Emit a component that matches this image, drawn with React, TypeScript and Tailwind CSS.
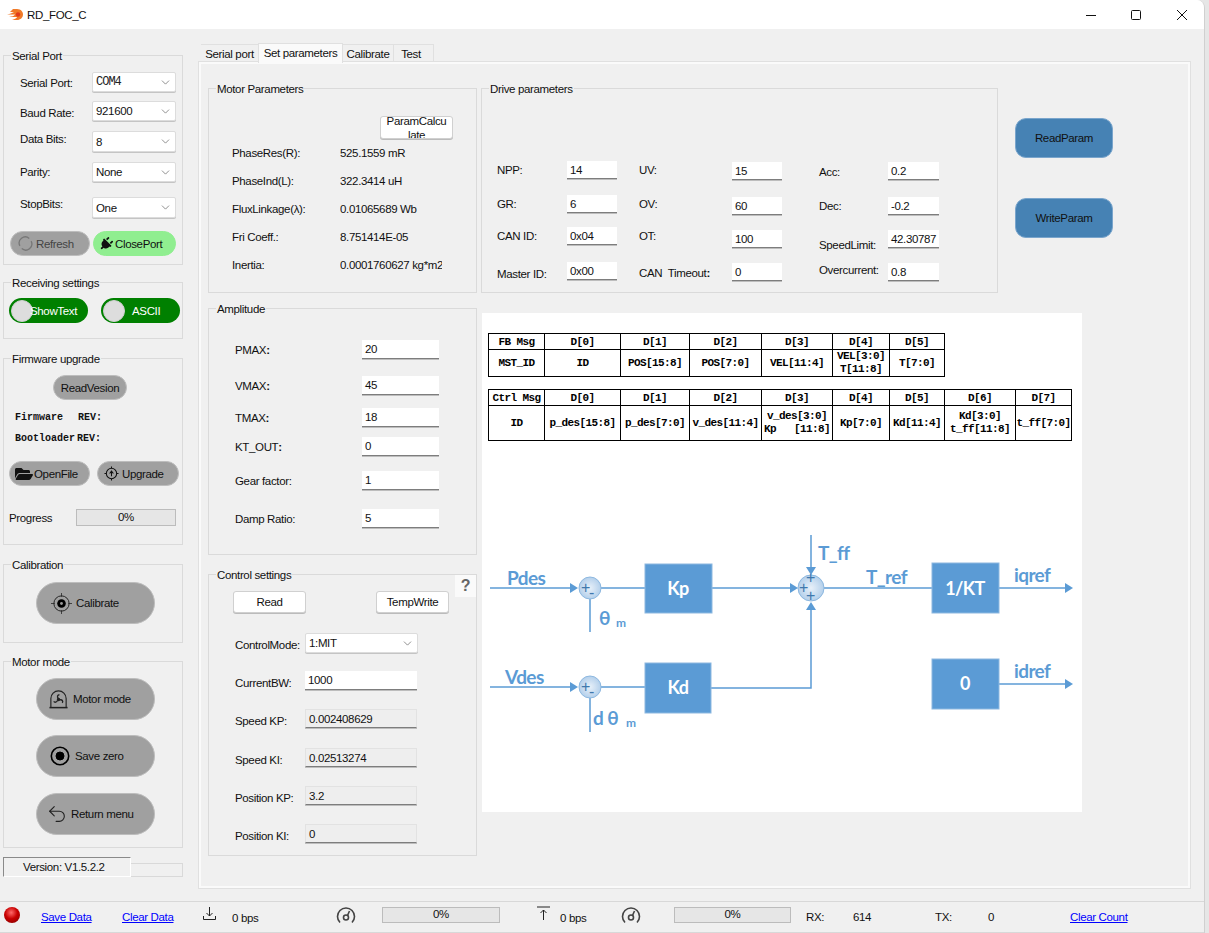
import React from "react";
import { ChevronDown, Undo2 } from "lucide-react";
import { FaPlug, FaFolderOpen } from "react-icons/fa";

const Group = ({ title, className = "", children }: { title: string; className?: string; children?: React.ReactNode }) => (
  <section className={`relative shrink-0 border border-[#dadada] ${className}`}>
    <span className="absolute left-[7px] top-[-7px] bg-[#f0f0f0] px-[1px] leading-[14px] whitespace-nowrap">{title}</span>
    {children}
  </section>
);

const Select = ({ value, className = "", mono = false }: { value: string; className?: string; mono?: boolean }) => (
  <div className={`flex items-center justify-between bg-white border border-[#dcdcdc] rounded-[2px] pl-[3px] pr-[3px] shadow-[0_1px_0_#c4c4c4] ${className}`}>
    <span className={mono ? "font-['Liberation_Mono',monospace] text-[12px] tracking-[-1px] text-[#222]" : ""}>{value}</span>
    <ChevronDown size={13} strokeWidth={1.2} color="#555" />
  </div>
);

const Input = ({ value, className = "", gray = false }: { value: string; className?: string; gray?: boolean }) => (
  <div className={`flex items-center shrink-0 border-b border-[#7d7d7d] shadow-[0_1px_0_#bdbdbd] px-[3px] overflow-hidden whitespace-nowrap ${gray ? "bg-[#eeeeee] border-t border-l border-r border-t-[#e2e2e2] border-l-[#e2e2e2] border-r-[#e2e2e2]" : "bg-white"} ${className}`}>
    {value}
  </div>
);

const Row = ({ label, value, rowClass = "", labelClass = "", inputClass = "", gray = false }: { label: React.ReactNode; value: string; rowClass?: string; labelClass?: string; inputClass?: string; gray?: boolean }) => (
  <div className={`flex items-center shrink-0 ${rowClass}`}>
    <span className={`shrink-0 whitespace-nowrap ${labelClass}`}>{label}</span>
    <Input value={value} className={`h-full ${inputClass}`} gray={gray} />
  </div>
);

const SerialRow = ({ label, value, rowClass = "", labelClass = "", mono = false }: { label: string; value: string; rowClass?: string; labelClass?: string; mono?: boolean }) => (
  <div className={`flex items-center pl-[16px] shrink-0 ${rowClass}`}>
    <span className={`w-[72px] shrink-0 ${labelClass}`}>{label}</span>
    <Select value={value} className="w-[84px] h-full" mono={mono} />
  </div>
);

const Pill = ({ className = "", green = false, children }: { className?: string; green?: boolean; children?: React.ReactNode }) => (
  <div className={`flex items-center shrink-0 rounded-full border whitespace-nowrap ${green ? "bg-[#90ee90] border-[#90ee90]" : "bg-[#a0a0a0] border-[#bdbdbd]"} ${className}`}>{children}</div>
);

const WhiteBtn = ({ className = "", children }: { className?: string; children?: React.ReactNode }) => (
  <div className={`flex items-center justify-center shrink-0 bg-white border border-[#d0d0d0] rounded-[3px] shadow-[0_1px_0_#bbb] ${className}`}>{children}</div>
);

const Progress = ({ className = "" }: { className?: string }) => (
  <div className={`flex items-center justify-center shrink-0 bg-[#e6e6e6] border border-[#bcbcbc] pb-[2px] ${className}`}>0%</div>
);

const Toggle = ({ text, textClass }: { text: string; textClass: string }) => (
  <div className="flex items-center w-[79px] h-[25px] shrink-0 rounded-full bg-[#008000] pl-[2px] text-white">
    <span className="w-[22px] h-[22px] rounded-full bg-[#dddddd] border border-[#cfcfcf] shrink-0" />
    <span className={textClass}>{text}</span>
  </div>
);

const GaugeIcon = ({ className = "" }: { className?: string }) => (
  <svg viewBox="0 0 20 18" width={20} height={18} fill="none" stroke="#444" strokeWidth={1.6} className={`shrink-0 ${className}`}>
    <path d="M4 16.5 A8.5 8.5 0 1 1 16 16.5" />
    <circle cx={10} cy={11.5} r={2.5} />
    <path d="M11.5 9.5 L13.5 5" />
  </svg>
);

const Th = ({ children }: { children: React.ReactNode }) => <th className="border border-black p-0 font-bold text-center align-middle">{children}</th>;
const Td = ({ children }: { children: React.ReactNode }) => <td className="border border-black p-0 font-bold text-center align-middle leading-[13px] whitespace-pre">{children}</td>;

const blue = "#5b9bd5";
const Sum = ({ cx, cy, r, id }: { cx: number; cy: number; r: number; id: string }) => (
  <circle cx={cx} cy={cy} r={r} fill={`url(#${id})`} stroke="#8db8e0" strokeWidth={1} />
);
const Arrow = ({ d }: { d: string }) => <path d={d} fill={blue} />;

const Diagram = () => (
  <svg viewBox="482 525 600 240" width={600} height={240} className="block mt-[86px] ml-[-6px] shrink-0" fontFamily="Lato, sans-serif" fontWeight={700}>
    <defs>
      <radialGradient id="sumg" cx="0.5" cy="0.5" r="0.6">
        <stop offset="0" stopColor="#e8f0f9" />
        <stop offset="1" stopColor="#a9c9e8" />
      </radialGradient>
    </defs>
    <g stroke={blue} strokeWidth={1.5} fill="none">
      <path d="M490 586 H572" />
      <path d="M601 586 H645" />
      <path d="M712 586 H792" />
      <path d="M824 586 H932" />
      <path d="M999 586 H1066" />
      <path d="M590 597 V630" />
      <path d="M811 533 V566" />
      <path d="M490 685 H572" />
      <path d="M601 685 H645" />
      <path d="M711 686 H811 V608" />
      <path d="M590 696 V730" />
      <path d="M999 682 H1066" />
    </g>
    <Sum cx={590} cy={586} r={11} id="sumg" />
    <Sum cx={590} cy={685} r={11} id="sumg" />
    <Sum cx={811} cy={586} r={13} id="sumg" />
    <Arrow d="M578 586 L570 581 V591 Z" />
    <Arrow d="M798 586 L790 581 V591 Z" />
    <Arrow d="M811 573 L806 565 H816 Z" />
    <Arrow d="M811 600 L806 608 H816 Z" />
    <Arrow d="M1073 586 L1065 581 V591 Z" />
    <Arrow d="M578 685 L570 680 V690 Z" />
    <Arrow d="M1073 682 L1065 677 V687 Z" />
    <g fill={blue} stroke="#8db8e0" strokeWidth={1}>
      <rect x={645} y={562} width={67} height={49} />
      <rect x={645} y={661} width={66} height={50} />
      <rect x={932} y={561} width={67} height={50} />
      <rect x={932} y={657} width={67} height={50} />
    </g>
    <g fill="#ffffff" fontSize={18} textAnchor="middle">
      <text x={678} y={593}>Kp</text>
      <text x={678} y={692}>Kd</text>
      <text x={965} y={593}>1/KT</text>
      <text x={965} y={688}>0</text>
    </g>
    <g fill={blue} fontSize={19}>
      <text x={507} y={583}>Pdes</text>
      <text x={505} y={682}>Vdes</text>
      <text x={818} y={558}>T_ff</text>
      <text x={866} y={582}>T_ref</text>
      <text x={1014} y={580}>iqref</text>
      <text x={1014} y={676}>idref</text>
      <text x={599} y={623}>θ</text>
      <text x={616} y={625} fontSize={12}>m</text>
      <text x={593} y={723}>d θ</text>
      <text x={626} y={725} fontSize={12}>m</text>
    </g>
    <g fill="#3f78ad" fontSize={16} fontFamily="'Liberation Sans', sans-serif" fontWeight={400}>
      <text x={581} y={591}>+</text>
      <text x={589} y={596}>-</text>
      <text x={581} y={690}>+</text>
      <text x={589} y={695}>-</text>
      <text x={806} y={581}>+</text>
      <text x={799} y={591}>+</text>
      <text x={806} y={599}>+</text>
    </g>
  </svg>
);

export default function App() {
  return (
    <div className="w-[1209px] h-[933px] overflow-hidden bg-[#e6e6e6] font-['Liberation_Sans',sans-serif] text-[11.5px] tracking-[-0.35px] leading-[14px] text-[#111]">
      <div className="w-[1205px] h-[933px] flex flex-col bg-[#f0f0f0] rounded-tr-[8px] overflow-hidden border-r border-[#d0d0d0]">
        {/* Title bar */}
        <header className="flex items-center h-[29px] shrink-0 bg-white pl-[7px]">
          <svg viewBox="0 0 16 11" width={16} height={11} className="shrink-0">
            <path d="M6 0 H10 C14 0 16 3 16 5.5 C16 8.5 13.5 11 10 11 H5 C8 10 10 9 10 8 H2 C5 7.5 7 7 8 5.5 H0 C3 5 5 4 7 3 H3 C4 2 5 1 6 0 Z" fill="#f07a28" />
            <circle cx={11} cy={5.5} r={2.2} fill="#e23c1a" />
          </svg>
          <span className="ml-[4px]">RD_FOC_C</span>
          <div className="ml-auto flex items-center">
            <svg width={12} height={12} viewBox="0 0 12 12" className="shrink-0"><path d="M1 6.5 H11" stroke="#111" /></svg>
            <svg width={12} height={12} viewBox="0 0 12 12" className="ml-[33px] shrink-0"><rect x={1.5} y={1.5} width={9} height={9} rx={1} fill="none" stroke="#111" /></svg>
            <svg width={12} height={12} viewBox="0 0 12 12" className="ml-[34px] mr-[16px] shrink-0"><path d="M1 1 L11 11 M11 1 L1 11" stroke="#111" /></svg>
          </div>
        </header>

        {/* Body */}
        <div className="flex h-[872px] shrink-0">
          {/* Left column */}
          <aside className="w-[180px] ml-[3px] shrink-0 flex flex-col pt-[26px]">
            <Group title="Serial Port" className="h-[210px] flex flex-col pt-[16px]">
              <SerialRow label="Serial Port:" value="COM4" mono rowClass="h-[20px]" labelClass="mt-[2px]" />
              <SerialRow label="Baud Rate:" value="921600" rowClass="h-[20px] mt-[9px]" labelClass="mt-[4px]" />
              <SerialRow label="Data Bits:" value="8" rowClass="h-[21px] mt-[10px]" labelClass="mb-[5px]" />
              <SerialRow label="Parity:" value="None" rowClass="h-[20px] mt-[10px]" />
              <SerialRow label="StopBits:" value="One" rowClass="h-[21px] mt-[15px]" labelClass="mb-[7px]" />
              <div className="flex mt-[13px] pl-[6px]">
                <Pill className="w-[80px] h-[25px] pl-[7px] text-[#444]">
                  <svg viewBox="0 0 16 16" width={15} height={15} fill="none" stroke="#777" strokeWidth={1.4} className="shrink-0">
                    <path d="M2 10.5 A6.5 6.5 0 0 1 12 2.6 M14 5.5 A6.5 6.5 0 0 1 4 13.4" />
                  </svg>
                  <span className="ml-[3px]">Refresh</span>
                </Pill>
                <Pill green className="w-[83px] h-[25px] ml-[3px] pl-[5px]">
                  <FaPlug size={14} className="rotate-45" />
                  <span className="ml-[2px]">ClosePort</span>
                </Pill>
              </div>
            </Group>

            <Group title="Receiving settings" className="h-[57px] mt-[17px] flex pt-[15px] pl-[5px] gap-[13px]">
              <Toggle text="ShowText" textClass="ml-[-3px]" />
              <Toggle text="ASCII" textClass="ml-[7px]" />
            </Group>

            <Group title="Firmware upgrade" className="h-[187px] mt-[19px] flex flex-col pt-[16px]">
              <Pill className="w-[74px] h-[25px] ml-[49px] justify-center">ReadVesion</Pill>
              <div className="mt-[11px] ml-[11px] h-[14px] flex font-['Liberation_Mono',monospace] text-[10px] tracking-normal font-bold">
                <span className="w-[63px]">Firmware</span>REV:
              </div>
              <div className="mt-[7px] ml-[11px] h-[14px] flex font-['Liberation_Mono',monospace] text-[10px] tracking-normal font-bold">
                <span className="w-[62px]">Bootloader</span>REV:
              </div>
              <div className="flex mt-[15px] ml-[5px]">
                <Pill className="w-[81px] h-[25px] pl-[5px]">
                  <FaFolderOpen size={18} color="#111" />
                  <span className="ml-[1px]">OpenFile</span>
                </Pill>
                <Pill className="w-[82px] h-[25px] ml-[7px] pl-[6px]">
                  <svg viewBox="0 0 16 16" width={15} height={15} fill="none" stroke="#111" strokeWidth={1.1} className="shrink-0">
                    <circle cx={8} cy={8} r={5.5} />
                    <path d="M8 0.5 V2.5 M8 13.5 V15.5 M0.5 8 H2.5 M13.5 8 H15.5 M8 11 V6 M6 8 L8 5.5 L10 8" />
                  </svg>
                  <span className="ml-[3px]">Upgrade</span>
                </Pill>
              </div>
              <div className="flex items-center mt-[23px] ml-[5px]">
                <span className="w-[67px]">Progress</span>
                <Progress className="w-[100px] h-[17px]" />
              </div>
            </Group>

            <Group title="Calibration" className="h-[79px] mt-[19px] pt-[17px] pl-[32px]">
              <Pill className="w-[119px] h-[42px] pl-[14px]">
                <svg viewBox="0 0 22 22" width={21} height={21} fill="none" stroke="#222" className="shrink-0">
                  <circle cx={11} cy={11} r={8} strokeWidth={1} />
                  <circle cx={11} cy={11} r={4.5} fill="#000" strokeWidth={0} />
                  <circle cx={11} cy={11} r={1.5} fill="#999" strokeWidth={0} />
                  <path d="M11 0 V4 M11 18 V22 M0 11 H4 M18 11 H22" strokeWidth={0.8} />
                </svg>
                <span className="ml-[4px]">Calibrate</span>
              </Pill>
            </Group>

            <Group title="Motor mode" className="h-[187px] mt-[18px] flex flex-col pt-[16px] pl-[32px]">
              <Pill className="w-[119px] h-[42px] pl-[11px]">
                <svg viewBox="0 0 22 22" width={21} height={21} fill="none" stroke="#222" strokeWidth={1.2} className="shrink-0">
                  <path d="M3 19 V10 A8 8 0 0 1 19 10 V19" />
                  <path d="M1.5 19.5 H20.5" strokeWidth={1.6} />
                  <circle cx={11} cy={11} r={1.2} fill="#222" />
                  <path d="M11 10 C9 8 10 6 12 6 M12 11.5 C15 10.5 16 13 15 14.5 M10 12 C9 14 7 14.5 6 13" strokeWidth={1.4} />
                </svg>
                <span className="ml-[4px]">Motor mode</span>
              </Pill>
              <Pill className="w-[119px] h-[42px] mt-[15px] pl-[13px]">
                <svg viewBox="0 0 20 20" width={20} height={20} fill="none" stroke="#000" className="shrink-0">
                  <circle cx={10} cy={10} r={8.7} strokeWidth={1.6} />
                  <circle cx={10} cy={10} r={4} fill="#000" />
                </svg>
                <span className="ml-[5px]">Save zero</span>
              </Pill>
              <Pill className="w-[119px] h-[42px] mt-[16px] pl-[9px]">
                <Undo2 size={22} strokeWidth={1.2} color="#222" />
                <span className="ml-[3px]">Return menu</span>
              </Pill>
            </Group>

            <div className="flex items-end mt-[9px]">
              <div className="w-[128px] h-[20px] flex items-center pl-[19px] border-t border-l border-t-[#8a8a8a] border-l-[#8a8a8a] border-b border-r border-b-white border-r-white shrink-0">
                Version: V1.5.2.2
              </div>
              <div className="w-[52px] h-[14px] border-t border-r border-b border-[#d9d9d9]" />
            </div>
          </aside>

          {/* Tabs + panel */}
          <main className="w-[991px] ml-[16px] shrink-0 flex flex-col pt-[14px]">
            <nav className="flex items-end h-[19px] pl-[2px] shrink-0 z-10">
              <div className="w-[57px] h-[18px] flex items-center justify-center border-t border-[#e0e0e0]">Serial port</div>
              <div className="w-[85px] h-[20px] mb-[-1px] flex items-start pt-[2px] justify-center bg-[#fafafa] border-t border-l border-r border-[#e0e0e0]">Set parameters</div>
              <div className="w-[51px] h-[18px] flex items-center justify-center border-t border-r border-[#e0e0e0]">Calibrate</div>
              <div className="w-[40px] h-[18px] flex items-center justify-center border-t border-r border-[#e0e0e0] pr-[5px]">Test</div>
            </nav>
            <div className="h-[826px] shrink-0 border-2 border-[#fafafa] outline outline-[#e0e0e0] flex pl-[7px] pt-[24px] gap-[4px]">
              {/* Column A */}
              <div className="w-[269px] shrink-0 flex flex-col">
                <Group title="Motor Parameters" className="h-[205px] flex flex-col pt-[27px]">
                  <WhiteBtn className="w-[73px] h-[23px] ml-[171px] overflow-hidden">
                    <span className="w-[68px] text-center leading-[14px] h-[28px] block">ParamCalcu<br />late</span>
                  </WhiteBtn>
                  {[
                    ["PhaseRes(R):", "525.1559 mR"],
                    ["PhaseInd(L):", "322.3414 uH"],
                    ["FluxLinkage(λ):", "0.01065689 Wb"],
                    ["Fri Coeff.:", "8.751414E-05"],
                    ["Inertia:", "0.0001760627 kg*m2"],
                  ].map(([a, b]) => (
                    <div key={a} className="flex items-center h-[28px] pl-[23px]">
                      <span className="w-[108px]">{a}</span>
                      <span className="w-[102px] overflow-hidden whitespace-nowrap">{b}</span>
                    </div>
                  ))}
                </Group>

                <Group title="Amplitude" className="h-[247px] mt-[15px] flex flex-col pt-[31px] pl-[26px]">
                  <Row label={<>PMAX<b>:</b></>} value="20" rowClass="h-[19px]" labelClass="w-[127px]" inputClass="w-[77px]" />
                  <Row label={<>VMAX<b>:</b></>} value="45" rowClass="h-[19px] mt-[17px]" labelClass="w-[127px]" inputClass="w-[77px]" />
                  <Row label={<>TMAX<b>:</b></>} value="18" rowClass="h-[19px] mt-[13px]" labelClass="w-[127px]" inputClass="w-[77px]" />
                  <Row label={<>KT_OUT<b>:</b></>} value="0" rowClass="h-[19px] mt-[10px]" labelClass="w-[127px]" inputClass="w-[77px]" />
                  <Row label="Gear factor:" value="1" rowClass="h-[19px] mt-[15px]" labelClass="w-[127px]" inputClass="w-[77px]" />
                  <Row label="Damp Ratio:" value="5" rowClass="h-[19px] mt-[19px]" labelClass="w-[127px]" inputClass="w-[77px]" />
                </Group>

                <Group title="Control settings" className="h-[282px] mt-[19px] flex flex-col pt-[16px] pl-[24px]">
                  <span className="absolute right-[0px] top-[0px] w-[21px] h-[22px] bg-[#fafafa] flex items-center justify-center text-[16px] font-bold text-[#666]">?</span>
                  <div className="flex gap-[70px]">
                    <WhiteBtn className="w-[73px] h-[22px]">Read</WhiteBtn>
                    <WhiteBtn className="w-[73px] h-[22px]">TempWrite</WhiteBtn>
                  </div>
                  <div className="flex items-center h-[20px] mt-[20px] ml-[2px]">
                    <span className="w-[70px] mt-[4px] whitespace-nowrap">ControlMode:</span>
                    <Select value="1:MIT" className="w-[113px] h-full" />
                  </div>
                  <Row label="CurrentBW:" value="1000" rowClass="h-[19px] mt-[18px] ml-[2px]" labelClass="w-[70px] mt-[4px]" inputClass="w-[112px]" />
                  <Row gray label="Speed KP:" value="0.002408629" rowClass="h-[19px] mt-[19px] ml-[2px]" labelClass="w-[70px] mt-[4px]" inputClass="w-[112px]" />
                  <Row gray label="Speed KI:" value="0.02513274" rowClass="h-[19px] mt-[20px] ml-[2px]" labelClass="w-[70px] mt-[4px]" inputClass="w-[112px]" />
                  <Row gray label="Position KP:" value="3.2" rowClass="h-[19px] mt-[19px] ml-[2px]" labelClass="w-[70px] mt-[4px]" inputClass="w-[112px]" />
                  <Row gray label="Position KI:" value="0" rowClass="h-[19px] mt-[19px] ml-[2px]" labelClass="w-[70px] mt-[4px]" inputClass="w-[112px]" />
                </Group>
              </div>

              {/* Column B */}
              <div className="flex flex-col shrink-0">
                <div className="flex">
                  <Group title="Drive parameters" className="w-[517px] h-[205px] flex pt-[72px] pl-[15px]">
                    <div className="w-[142px] flex flex-col shrink-0">
                      <Row label="NPP:" value="14" rowClass="h-[18px]" labelClass="w-[70px]" inputClass="w-[50px]" />
                      <Row label="GR:" value="6" rowClass="h-[18px] mt-[16px]" labelClass="w-[70px]" inputClass="w-[50px]" />
                      <Row label="CAN ID:" value="0x04" rowClass="h-[18px] mt-[14px]" labelClass="w-[70px]" inputClass="w-[50px]" />
                      <Row label="Master ID:" value="0x00" rowClass="h-[18px] mt-[17px]" labelClass="w-[70px] mt-[6px]" inputClass="w-[50px]" />
                    </div>
                    <div className="w-[180px] flex flex-col shrink-0 pt-[1px]">
                      <Row label="UV:" value="15" rowClass="h-[18px]" labelClass="w-[93px] mb-[2px]" inputClass="w-[50px]" />
                      <Row label="OV:" value="60" rowClass="h-[18px] mt-[17px]" labelClass="w-[93px] mb-[4px]" inputClass="w-[50px]" />
                      <Row label="OT:" value="100" rowClass="h-[18px] mt-[15px]" labelClass="w-[93px] mb-[6px]" inputClass="w-[50px]" />
                      <Row label={<>CAN&nbsp; Timeout<b>:</b></>} value="0" rowClass="h-[18px] mt-[15px]" labelClass="w-[93px] mt-[2px]" inputClass="w-[50px]" />
                    </div>
                    <div className="flex flex-col shrink-0 pt-[1px]">
                      <Row label="Acc:" value="0.2" rowClass="h-[18px]" labelClass="w-[69px] mt-[2px]" inputClass="w-[51px]" />
                      <Row label="Dec:" value="-0.2" rowClass="h-[18px] mt-[17px]" labelClass="w-[69px]" inputClass="w-[51px]" />
                      <Row label="SpeedLimit:" value="42.30787" rowClass="h-[18px] mt-[15px]" labelClass="w-[69px] mt-[12px]" inputClass="w-[51px]" />
                      <Row label="Overcurrent:" value="0.8" rowClass="h-[18px] mt-[15px]" labelClass="w-[69px] mb-[4px]" inputClass="w-[51px]" />
                    </div>
                  </Group>
                  <div className="flex flex-col ml-[17px] pt-[30px] gap-[40px]">
                    <div className="w-[98px] h-[40px] flex items-center justify-center rounded-[11px] bg-[#4682b4] border border-[#7aa5cc]">ReadParam</div>
                    <div className="w-[98px] h-[40px] flex items-center justify-center rounded-[11px] bg-[#4682b4] border border-[#7aa5cc]">WriteParam</div>
                  </div>
                </div>

                <div className="w-[600px] h-[499px] mt-[20px] ml-[1px] bg-white pt-[20px] pl-[6px] flex flex-col font-['Liberation_Mono',monospace] text-[11px] tracking-[-0.6px] text-black">
                  <table className="table-fixed border-collapse w-[456px] h-[42px] shrink-0">
                    <colgroup>
                      <col className="w-[56px]" /><col className="w-[76px]" /><col className="w-[69px]" /><col className="w-[72px]" /><col className="w-[71px]" /><col className="w-[57px]" /><col className="w-[55px]" />
                    </colgroup>
                    <tbody>
                      <tr className="h-[16px]"><Th>FB Msg</Th><Th>D[0]</Th><Th>D[1]</Th><Th>D[2]</Th><Th>D[3]</Th><Th>D[4]</Th><Th>D[5]</Th></tr>
                      <tr className="h-[26px]"><Td>MST_ID</Td><Td>ID</Td><Td>POS[15:8]</Td><Td>POS[7:0]</Td><Td>VEL[11:4]</Td><Td>{"VEL[3:0]\nT[11:8]"}</Td><Td>T[7:0]</Td></tr>
                    </tbody>
                  </table>
                  <table className="table-fixed border-collapse w-[583px] h-[51px] mt-[12px] shrink-0">
                    <colgroup>
                      <col className="w-[56px]" /><col className="w-[76px]" /><col className="w-[69px]" /><col className="w-[72px]" /><col className="w-[71px]" /><col className="w-[57px]" /><col className="w-[55px]" /><col className="w-[71px]" /><col className="w-[56px]" />
                    </colgroup>
                    <tbody>
                      <tr className="h-[16px]"><Th>Ctrl Msg</Th><Th>D[0]</Th><Th>D[1]</Th><Th>D[2]</Th><Th>D[3]</Th><Th>D[4]</Th><Th>D[5]</Th><Th>D[6]</Th><Th>D[7]</Th></tr>
                      <tr className="h-[35px]"><Td>ID</Td><Td>p_des[15:8]</Td><Td>p_des[7:0]</Td><Td>v_des[11:4]</Td><Td>{"v_des[3:0]\nKp   [11:8]"}</Td><Td>Kp[7:0]</Td><Td>Kd[11:4]</Td><Td>{"Kd[3:0]\nt_ff[11:8]"}</Td><Td>t_ff[7:0]</Td></tr>
                    </tbody>
                  </table>
                  <Diagram />
                </div>
              </div>
            </div>
          </main>
        </div>

        {/* Status bar */}
        <footer className="h-[32px] shrink-0 flex items-center border-t border-b border-[#d8d8d8] whitespace-nowrap">
          <span className="w-[16px] h-[16px] ml-[4px] mb-[4px] shrink-0 rounded-full bg-[radial-gradient(circle_at_45%_35%,#ff6a6a,#c80000_45%,#7a0000)]" />
          <a className="w-[51px] ml-[21px] shrink-0 text-[#0000ff] underline">Save Data</a>
          <a className="w-[53px] ml-[30px] shrink-0 text-[#0000ff] underline">Clear Data</a>
          <svg viewBox="0 0 15 15" width={15} height={15} fill="none" stroke="#222" className="ml-[27px] mb-[8px] shrink-0">
            <path d="M7.5 1 V10 M4.5 7 L7.5 10 L10.5 7 M1.5 10 V13.5 H13.5 V10" />
          </svg>
          <span className="w-[27px] ml-[15px] shrink-0 mt-[2px]">0 bps</span>
          <GaugeIcon className="ml-[77px] mb-[4px]" />
          <Progress className="w-[118px] h-[16px] ml-[26px] mb-[5px]" />
          <svg viewBox="0 0 15 15" width={15} height={15} fill="none" stroke="#222" className="ml-[36px] mb-[8px] shrink-0">
            <path d="M1 1 H14 M7.5 14 V4 M4.5 7 L7.5 4 L10.5 7" />
          </svg>
          <span className="w-[27px] ml-[9px] shrink-0 mt-[2px]">0 bps</span>
          <GaugeIcon className="ml-[34px] mb-[4px]" />
          <Progress className="w-[117px] h-[16px] ml-[33px] mb-[5px]" />
          <span className="w-[47px] ml-[15px] shrink-0">RX:</span>
          <span className="w-[82px] shrink-0">614</span>
          <span className="w-[53px] shrink-0">TX:</span>
          <span className="w-[82px] shrink-0">0</span>
          <a className="shrink-0 text-[#0000ff] underline">Clear Count</a>
        </footer>
      </div>
    </div>
  );
}
